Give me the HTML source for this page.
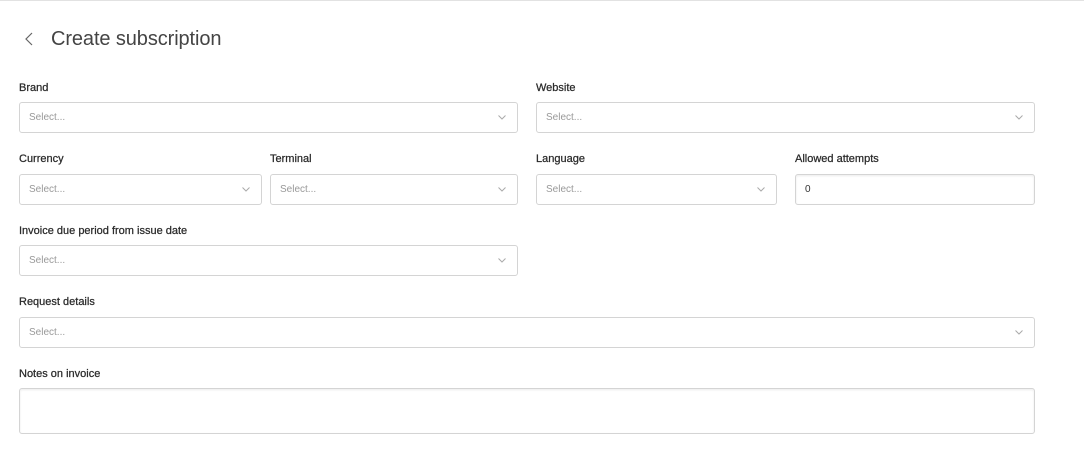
<!DOCTYPE html>
<html><head><style>
body{margin:0;width:1084px;height:462px;background:#fff;font-family:"Liberation Sans",sans-serif;position:relative;overflow:hidden}
.top{position:absolute;left:0;top:0;width:1084px;height:1px;background:#e2e2e2}
.t{position:absolute;left:51px;top:28px;font-size:20px;color:#444;letter-spacing:-0.1px}
.bk{position:absolute;left:24px;top:32px}
.l{position:absolute;font-size:11px;color:#2a2a2a;font-weight:normal;-webkit-text-stroke:0.25px #2a2a2a;margin-top:1px}
.f{position:absolute;height:31px;box-sizing:border-box;border:1px solid #d4d4d4;border-radius:3px;font-size:10px;color:#999;line-height:29px;padding-left:9px}
.f svg{position:absolute;right:11px;top:12px}
.n{color:#333;box-shadow:inset 0 1px 2px rgba(0,0,0,.08)}
</style></head><body>
<div class="top"></div>
<svg class="bk" width="10" height="14" viewBox="0 0 10 14"><path d="M8 1L2 7l6 6" fill="none" stroke="#666" stroke-width="1.2"/></svg>
<div class="t">Create subscription</div>

<div class="l" style="left:19px;top:81px">Brand</div>
<div class="f" style="left:19px;top:102px;width:499px">Select...<svg width="8" height="5"><path d="M0.5 0.5l3.5 3.5l3.5-3.5" fill="none" stroke="#aaa"/></svg></div>
<div class="l" style="left:536px;top:81px">Website</div>
<div class="f" style="left:536px;top:102px;width:499px">Select...<svg width="8" height="5"><path d="M0.5 0.5l3.5 3.5l3.5-3.5" fill="none" stroke="#aaa"/></svg></div>

<div class="l" style="left:19px;top:152px">Currency</div>
<div class="f" style="left:19px;top:174px;width:243px">Select...<svg width="8" height="5"><path d="M0.5 0.5l3.5 3.5l3.5-3.5" fill="none" stroke="#aaa"/></svg></div>
<div class="l" style="left:270px;top:152px">Terminal</div>
<div class="f" style="left:270px;top:174px;width:248px">Select...<svg width="8" height="5"><path d="M0.5 0.5l3.5 3.5l3.5-3.5" fill="none" stroke="#aaa"/></svg></div>
<div class="l" style="left:536px;top:152px">Language</div>
<div class="f" style="left:536px;top:174px;width:241px">Select...<svg width="8" height="5"><path d="M0.5 0.5l3.5 3.5l3.5-3.5" fill="none" stroke="#aaa"/></svg></div>
<div class="l" style="left:795px;top:152px">Allowed attempts</div>
<div class="f n" style="left:795px;top:174px;width:240px">0</div>

<div class="l" style="left:19px;top:224px">Invoice due period from issue date</div>
<div class="f" style="left:19px;top:245px;width:499px">Select...<svg width="8" height="5"><path d="M0.5 0.5l3.5 3.5l3.5-3.5" fill="none" stroke="#aaa"/></svg></div>

<div class="l" style="left:19px;top:295px">Request details</div>
<div class="f" style="left:19px;top:317px;width:1016px">Select...<svg width="8" height="5"><path d="M0.5 0.5l3.5 3.5l3.5-3.5" fill="none" stroke="#aaa"/></svg></div>

<div class="l" style="left:19px;top:367px">Notes on invoice</div>
<div class="f n" style="left:19px;top:388px;width:1016px;height:46px"></div>
</body></html>
